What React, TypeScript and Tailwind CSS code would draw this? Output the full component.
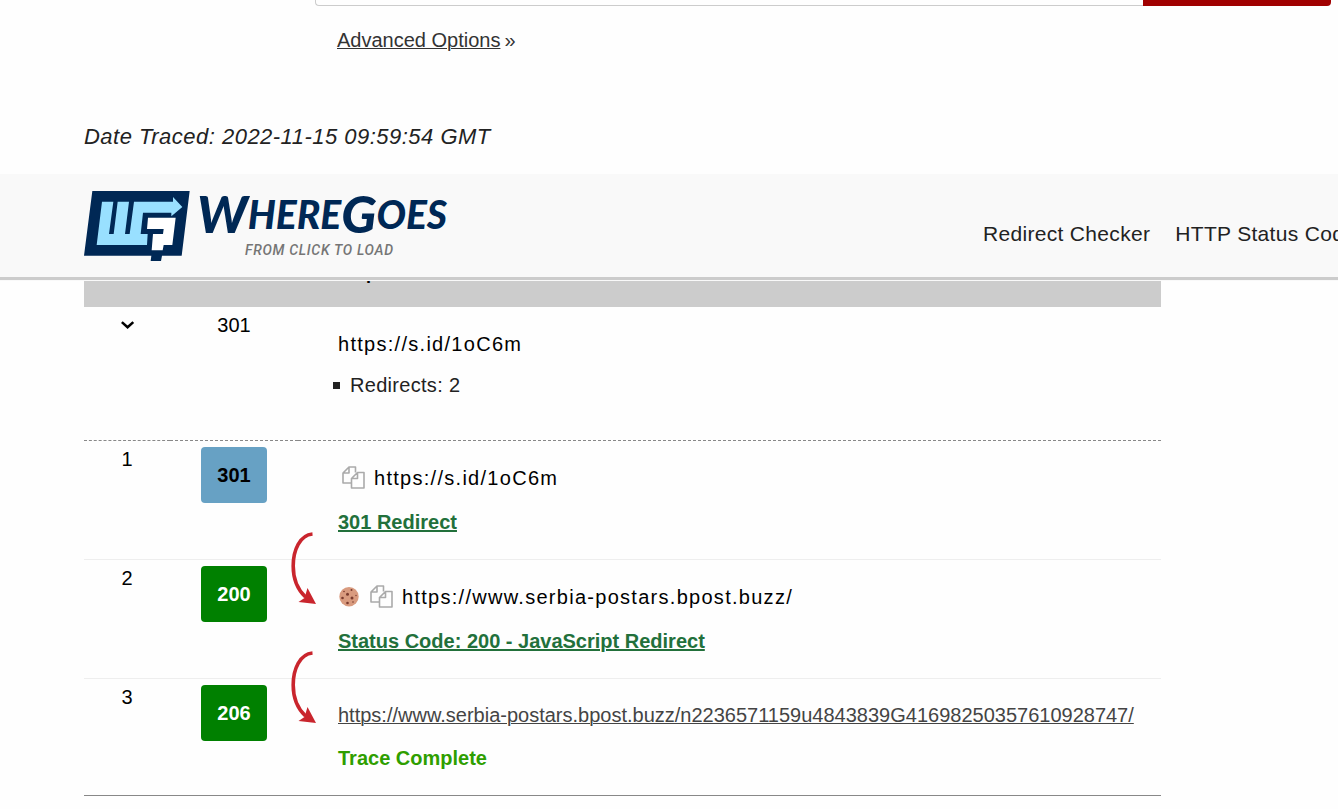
import React from "react";

interface Hop {
  step: number;
  code: string;
  url: string;
  status: string;
  hasCookie?: boolean;
  isFinal?: boolean;
}

const hops: Hop[] = [
  { step: 1, code: "301", url: "https://s.id/1oC6m", status: "301 Redirect" },
  {
    step: 2,
    code: "200",
    url: "https://www.serbia-postars.bpost.buzz/",
    status: "Status Code: 200 - JavaScript Redirect",
    hasCookie: true,
  },
  {
    step: 3,
    code: "206",
    url: "https://www.serbia-postars.bpost.buzz/n2236571159u4843839G41698250357610928747/",
    status: "Trace Complete",
    isFinal: true,
  },
];

function LogoMark() {
  return (
    <svg className="w-[107px] h-[72px] shrink-0" viewBox="42 60 321 216" aria-hidden="true">
      <path fill="#002855" d="M67 63H359L335 257H276L273 273H242L244 257H42Z" />
      <path
        fill="#99e0ff"
        d="M96 95H130L117 192H131L143 95H177L165 192H179L192 95H309V81L337 111L304 139V128H219L212 192H233L231 225H80Z"
      />
      <path fill="#fff" d="M234 143H317L307 225H281L278 241H245L249 192H279L281 177H231Z" />
    </svg>
  );
}

function CopyIcon() {
  return (
    <svg className="w-6 h-6" viewBox="0 0 24 24" fill="none" stroke="#aaa" strokeWidth="1.6" strokeLinejoin="round" aria-hidden="true">
      <path d="M9 17H1V7L7 1H13.500V6.500M7 1V7H1" />
      <path d="M15.500 6.500H22V22H9.500V12.500ZM15.500 6.500V12.500H9.500" />
    </svg>
  );
}

function CookieIcon() {
  return (
    <svg className="w-5 h-5" viewBox="0 0 20 20" role="img" aria-label="Sets cookies">
      <circle cx="10" cy="9.700" r="9.700" fill="#d99b7f" />
      <g fill="#7a3b2e">
        <circle cx="8.500" cy="7.300" r="1.500" />
        <circle cx="13" cy="11" r="1.500" />
        <circle cx="3.500" cy="11" r="1.300" />
        <circle cx="8.500" cy="16" r="1.300" />
        <circle cx="12.500" cy="3" r="1" />
        <circle cx="5" cy="4.500" r=".8" />
        <circle cx="14" cy="15" r=".8" />
        <circle cx="17" cy="8.500" r=".7" />
      </g>
    </svg>
  );
}

function HopArrow() {
  return (
    <svg className="absolute left-[121px] top-[91px] w-[26px] h-[74px]" viewBox="0 0 26 74" aria-hidden="true">
      <path d="M21.500 2C9 3 2.200 18 2.200 34C2.200 48 6 57 14.500 65" fill="none" stroke="#c9252d" strokeWidth="3.600" />
      <path d="M16.500 56L25 72L7.500 70L13.500 66Z" fill="#c9252d" />
    </svg>
  );
}

function SiteHeader() {
  return (
    <header className="relative z-10 flex items-start h-[106px] pl-[84px] bg-[#f9f9f9] border-b-3 border-[#ccc] shadow-[0_1px_0_#f9f9f9] overflow-x-clip">
      <a href="#home" className="flex gap-1.5 pt-4 shrink-0">
        <LogoMark />
        <span className="flex flex-col">
          <span className="font-['Lato',sans-serif] font-black italic text-[#002855] text-[52px] leading-[46px] whitespace-nowrap">
            W<span className="text-[39px] leading-none align-[4px]">HERE</span>G
            <span className="text-[39px] leading-none align-[4px]">OES</span>
          </span>
          <span className="pl-12 pt-1 font-['Roboto',sans-serif] font-medium italic text-[#757575] text-sm leading-5 tracking-wider whitespace-nowrap">
            FROM CLICK TO LOAD
          </span>
        </span>
      </a>
      <nav className="flex gap-[25px] w-[355px] ml-auto pt-11 shrink-0 overflow-x-clip whitespace-nowrap text-[21px] leading-8 tracking-[0.015em] text-[#222]">
        <a href="#redirect-checker">Redirect Checker</a>
        <a href="#status-codes">HTTP Status Codes</a>
      </nav>
    </header>
  );
}

function HopRow({ hop }: { hop: Hop }) {
  return (
    <tr className="h-[119px] align-top border-b border-[#eee] last:h-[117px] last:border-[#888]">
      <td className="pt-[3px] text-center">{hop.step}</td>
      <td className="relative pt-1.5">
        <span
          className={
            hop.code === "301"
              ? "block w-[66px] mx-auto rounded bg-[#67a1c4] text-center font-bold leading-[56px]"
              : "block w-[66px] mx-auto rounded bg-[#008000] text-center font-bold leading-[56px] text-white"
          }
        >
          {hop.code}
        </span>
        {!hop.isFinal && <HopArrow />}
      </td>
      {hop.isFinal ? (
        <td className="pt-[21px] pl-10">
          <a href="#destination" className="block underline decoration-1 text-[#444] whitespace-nowrap">{hop.url}</a>
          <p className="mt-[13px] font-bold text-[#2f9e00]">{hop.status}</p>
        </td>
      ) : (
        <td className="pt-[22px] pl-10">
          <div className="flex items-center pl-px gap-2">
            {hop.hasCookie && <CookieIcon />}
            <button type="button" aria-label="Copy URL" className="pl-[3px]"><CopyIcon /></button>
            <span className="tracking-[0.064em] whitespace-nowrap">{hop.url}</span>
          </div>
          <a href="#status" className="inline-block mt-3.5 font-bold underline text-[#22703b]">{hop.status}</a>
        </td>
      )}
    </tr>
  );
}

export default function App() {
  return (
    <div className="min-h-screen overflow-x-clip bg-[#fefefe] font-['Liberation_Sans',Arial,sans-serif] text-xl leading-[30px] text-black">
      <section className="h-[174px] overflow-hidden">
        <form className="flex h-12 -mt-[42px] ml-[315px] mr-[7px]">
          <input type="text" aria-label="URL to trace" className="grow border border-r-0 border-[#ccc] rounded-l bg-[#fefefe] px-4" />
          <button type="button" aria-label="Trace URL" className="w-[188px] rounded-r bg-[#a00000]" />
        </form>
        <div className="flex gap-1 mt-[19px] pl-[337px] text-[#333]">
          <a href="#advanced" className="underline decoration-1">Advanced Options</a>
          <span>»</span>
        </div>
        <p className="mt-[67px] pl-[84px] italic text-[22px] tracking-[0.022em] text-[#222]">Date Traced: 2022-11-15 09:59:54 GMT</p>
      </section>

      <SiteHeader />

      <main className="pl-[84px] pr-[177px]">
        <table className="w-full -mt-5 table-fixed border-collapse">
          <colgroup>
            <col className="w-[86px]" />
            <col className="w-[128px]" />
            <col />
          </colgroup>
          <thead>
            <tr className="h-[47px] align-top bg-[#ccc] text-lg leading-[26px]">
              <th aria-label="Number" />
              <th aria-label="Code" />
              <th className="pl-10 text-left font-bold">Step</th>
            </tr>
          </thead>
          <tbody>
            <tr className="h-[133px] align-top border-b border-dashed border-[#888]">
              <td className="pt-[10px]">
                <button type="button" aria-label="Collapse trace" className="block mx-auto">
                  <svg className="w-4 h-4" viewBox="0 0 14 14" fill="none" stroke="#000" strokeWidth="2.200" aria-hidden="true">
                    <path d="M2.500 4.500L7.500 9L12.500 4.500" />
                  </svg>
                </button>
              </td>
              <td className="pt-[3px] text-center">301</td>
              <td className="pt-[22px] pl-10">
                <p className="tracking-[0.064em]">https://s.id/1oC6m</p>
                <ul className="-ml-[5px] mt-[11px] text-[#222] tracking-[0.015em]">
                  <li className="flex items-center gap-[10px] before:w-[7px] before:h-[7px] before:bg-[#222]">Redirects: 2</li>
                </ul>
              </td>
            </tr>
            {hops.map((hop) => (
              <HopRow key={hop.step} hop={hop} />
            ))}
          </tbody>
        </table>
      </main>
    </div>
  );
}
